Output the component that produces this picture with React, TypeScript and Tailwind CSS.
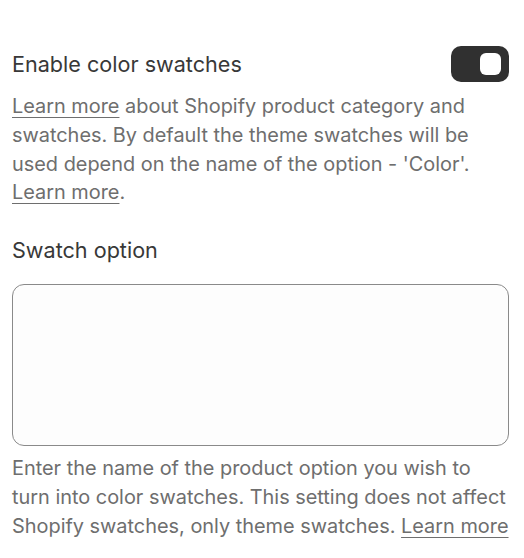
export default function App() {
  return (
    <div className="min-h-[558px] bg-white pl-3 pr-[15px] pt-[46px] font-['Inter',sans-serif] text-[19.9px] leading-[28.8px] text-[#6e6e6e]">
      <div className="flex items-center justify-between">
        <span className="text-[21.6px] text-[#383838]">Enable color swatches</span>
        <button className="flex h-9 w-[58px] items-center justify-end rounded-[10px] bg-[#303030] pr-2">
          <span className="h-[22px] w-[21px] rounded-[6px] bg-white" />
        </button>
      </div>
      <p className="mt-[10px]">
        <a className="underline underline-offset-4">Learn more</a> about Shopify product category and swatches. By default the theme swatches will be used depend on the name of the option - 'Color'.{' '}
        <a className="underline underline-offset-4">Learn more</a>.
      </p>
      <div className="mt-[28px] text-[21.6px] leading-[30px] text-[#383838]">Swatch option</div>
      <textarea className="mt-[19px] block h-[162px] w-full resize-none rounded-xl border border-[#8a8a8a] bg-[#fdfdfd]" />
      <p className="mt-2">
        Enter the name of the product option you wish to turn into color swatches. This setting does not affect Shopify swatches, only theme swatches.{' '}
        <a className="underline underline-offset-4">Learn more</a>
      </p>
    </div>
  )
}
